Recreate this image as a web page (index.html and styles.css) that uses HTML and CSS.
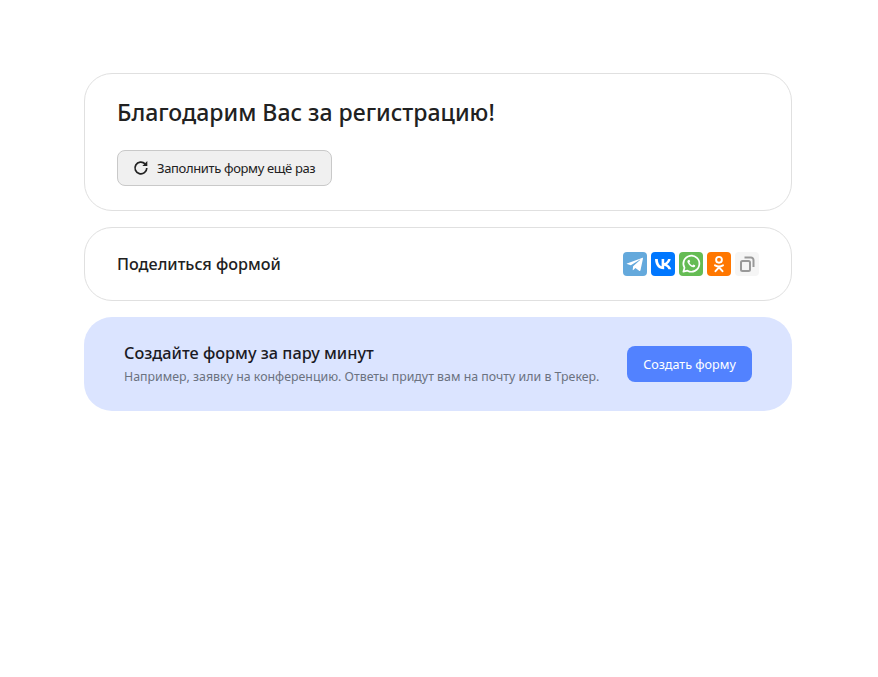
FILE: index.html
```html
<!DOCTYPE html>
<html lang="ru">
<head>
<meta charset="utf-8">
<title>Форма</title>
<link rel="stylesheet" href="styles.css">
</head>
<body>
<main class="page">
  <section class="card card-thanks">
    <h1 class="title">Благодарим Вас за регистрацию!</h1>
    <button class="btn-again" type="button">
      <svg class="again-icon" width="16" height="16" viewBox="0 0 16 16" fill="none"><path d="M13.800 8a5.900 5.900 0 1 1-1.700-4.200" stroke="#222" stroke-width="1.700"/><path d="M14.300 1v4.900H9.400z" fill="#222"/></svg>
      <span>Заполнить форму ещё раз</span>
    </button>
  </section>
  <section class="card card-share">
    <h2 class="share-title">Поделиться формой</h2>
    <div class="share-icons">
      <span class="ico ico-tg"><svg width="24" height="24" viewBox="0 0 24 24"><path d="M4 11.600 18.900 5.900c.7-.3 1.300.2 1 1l-2.400 11.300c-.2.800-.7 1-1.400.6l-3.700-2.700-1.800 1.700c-.3.300-.6.400-.9.300l.4-3.800 7-6.400c.3-.3-.1-.4-.4-.2L7.800 13.200l-3.800-1.100c-.7-.2-.7-.3 0-.5z" fill="#fff"/></svg></span>
      <span class="ico ico-vk"><svg width="24" height="24" viewBox="0 0 24 24"><path d="M12.800 17.300C7.300 17.300 4.200 13.500 4 7h2.800c.1 4.800 2.200 6.800 3.800 7.200V7h2.600v4.100c1.600-.2 3.300-2 3.900-4.100h2.600c-.4 2.500-2.300 4.400-3.600 5.200 1.300.6 3.400 2.300 4.200 5.100h-2.900c-.6-1.900-2.100-3.400-4.200-3.600v3.600z" fill="#fff"/></svg></span>
      <span class="ico ico-wa"><svg width="24" height="24" viewBox="0 0 24 24" fill="none"><path d="M4.400 19.700 5.500 15.800A8 8 0 1 1 8.500 18.700z" stroke="#fff" stroke-width="1.700" stroke-linejoin="round"/><path d="M9.300 7.900c-.5.300-1 1-.9 1.900.2 1.700 3.500 5.500 5.900 5.500 1 0 1.700-.6 1.900-1.400l-.1-.6-1.800-.9-.9 1c-1.100-.2-2.600-1.700-3-2.900l.8-.9-.8-1.800z" fill="#fff"/></svg></span>
      <span class="ico ico-ok"><svg width="24" height="24" viewBox="0 0 24 24" fill="none"><circle cx="12" cy="7.800" r="2.900" stroke="#fff" stroke-width="1.900"/><path d="M8 13.300c2.500 1.400 5.500 1.400 8 0M12 14.500v.8M12 15.300l-3.500 3.900M12 15.300l3.500 3.900" stroke="#fff" stroke-width="2" stroke-linecap="round"/></svg></span>
      <span class="ico ico-copy"><svg width="24" height="24" viewBox="0 0 24 24" fill="none"><rect x="6" y="9" width="9" height="10" rx="1.500" stroke="#999" stroke-width="2"/><path d="M9.500 5.500h6.500c1.300 0 2.500 1.200 2.500 2.500v7" stroke="#999" stroke-width="2"/></svg></span>
    </div>
  </section>
  <section class="promo">
    <div class="promo-text">
      <h2 class="promo-title">Создайте форму за пару минут</h2>
      <p class="promo-sub">Например, заявку на конференцию. Ответы придут вам на почту или в Трекер.</p>
    </div>
    <button class="btn-create" type="button">Создать форму</button>
  </section>
</main>
</body>
</html>
```
FILE: styles.css
```css
* { box-sizing: border-box; }
html, body { margin: 0; background: #fff; }
body { font-family: "Noto Sans", "Open Sans", sans-serif; color: #212121; height: 677px; overflow: hidden; }
.page { width: 708px; margin: 73px 0 0 84px; display: flex; flex-direction: column; gap: 16px; }
.card { border: 1px solid #e0e0e0; border-radius: 28px; background: #fff; padding: 0 32px; }
.card-thanks { height: 138px; padding-top: 24px; }
.title { margin: 0; font-size: 23.050px; line-height: 28px; font-weight: 500; }
.btn-again { display: flex; align-items: center; gap: 8px; width: 215px; height: 36px; margin-top: 24px; padding: 0 0 0 15px; border: 1px solid #c9c9c9; border-radius: 8px; background: #f0f0f0; font: inherit; font-size: 13px; letter-spacing: -0.36px; color: #212121; }
.card-share { height: 74px; display: flex; align-items: center; justify-content: space-between; }
.share-title { margin: 0; font-size: 16.200px; line-height: 22px; font-weight: 500; }
.share-icons { display: flex; gap: 4px; }
.ico { width: 24px; height: 24px; border-radius: 4px; display: block; }
.ico svg { display: block; }
.ico-tg { background: #64a9dc; }
.ico-vk { background: #07f; }
.ico-wa { background: #65bc54; }
.ico-ok { background: #ff7700; }
.ico-copy { background: #f5f5f5; }
.promo { height: 94px; border-radius: 28px; background: #dbe4ff; padding: 0 40px; display: flex; align-items: center; justify-content: space-between; }
.promo-title { margin: 0; font-size: 16.300px; line-height: 22px; font-weight: 500; color: #1a1a24; }
.promo-sub { margin: 4px 0 0; font-size: 12.370px; line-height: 18px; color: #6b7280; }
.btn-create { width: 125px; height: 36px; border: 0; border-radius: 8px; background: #5282ff; color: #fff; font: inherit; font-size: 12.600px; }
```
